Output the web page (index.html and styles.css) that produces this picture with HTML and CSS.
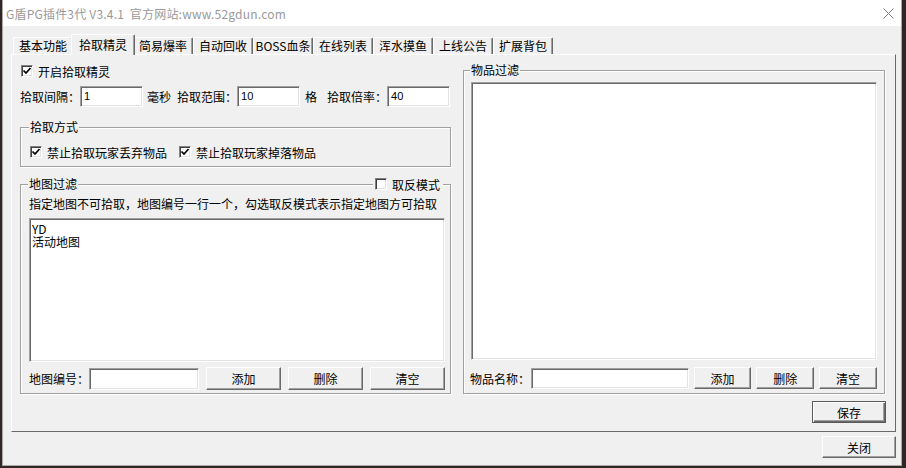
FILE: index.html
```html
<!DOCTYPE html>
<html lang="zh">
<head>
    <meta charset="UTF-8">
    <title>G盾PG插件3代</title>
    <link rel="stylesheet" href="styles.css">
</head>
<body>
    <div class="window">
        <div class="titlebar">
            <span class="title">G盾PG插件3代 V3.4.1&nbsp;&nbsp;官方网站:www.52gdun.com</span>
            <span class="close">
                <svg width="11" height="11" viewBox="0 0 11 11"><path d="M0.5 0.5 L10.5 10.5 M10.5 0.5 L0.5 10.5" stroke="#7a7a7a" stroke-width="1" fill="none"/></svg>
            </span>
        </div>
        <div class="client">
            <div class="tabs">
                <div class="tab">基本功能</div>
                <div class="tab active">拾取精灵</div>
                <div class="tab">简易爆率</div>
                <div class="tab">自动回收</div>
                <div class="tab">BOSS血条</div>
                <div class="tab">在线列表</div>
                <div class="tab">浑水摸鱼</div>
                <div class="tab">上线公告</div>
                <div class="tab">扩展背包</div>
            </div>

            <div class="panel">
                <!-- 左侧 -->
                <div class="left">
                    <label class="check first">
                        <span class="box"><svg width="10" height="10" viewBox="0 0 10 10"><path d="M1.5 4.5 L4 7 L8.5 2" stroke="#000" stroke-width="1.7" fill="none"/></svg></span>
                        开启拾取精灵
                    </label>
                    <div class="params">
                        <span class="lbl">拾取间隔：</span>
                        <input class="edit" value="1">
                        <span class="unit">毫秒</span>
                        <span class="lbl">拾取范围：</span>
                        <input class="edit" value="10">
                        <span class="unit short">格</span>
                        <span class="lbl">拾取倍率：</span>
                        <input class="edit" value="40">
                    </div>

                    <fieldset class="group way">
                        <legend>拾取方式</legend>
                        <label class="check">
                            <span class="box"><svg width="10" height="10" viewBox="0 0 10 10"><path d="M1.5 4.5 L4 7 L8.5 2" stroke="#000" stroke-width="1.7" fill="none"/></svg></span>
                            禁止拾取玩家丢弃物品
                        </label>
                        <label class="check">
                            <span class="box"><svg width="10" height="10" viewBox="0 0 10 10"><path d="M1.5 4.5 L4 7 L8.5 2" stroke="#000" stroke-width="1.7" fill="none"/></svg></span>
                            禁止拾取玩家掉落物品
                        </label>
                    </fieldset>

                    <fieldset class="group map">
                        <legend>地图过滤</legend>
                        <label class="check invert"><span class="box"></span>取反模式</label>
                        <div class="hint">指定地图不可拾取，地图编号一行一个，勾选取反模式表示指定地图方可拾取</div>
                        <textarea class="list">YD
活动地图</textarea>
                        <div class="row map-row">
                            <span class="lbl">地图编号：</span>
                            <input class="edit wide">
                            <button class="btn">添加</button>
                            <button class="btn">删除</button>
                            <button class="btn">清空</button>
                        </div>
                    </fieldset>
                </div>

                <!-- 右侧 -->
                <fieldset class="group items">
                    <legend>物品过滤</legend>
                    <textarea class="list"></textarea>
                    <div class="row item-row">
                        <span class="lbl">物品名称：</span>
                        <input class="edit wide">
                        <button class="btn">添加</button>
                        <button class="btn">删除</button>
                        <button class="btn">清空</button>
                    </div>
                </fieldset>

                <div class="save-row">
                    <button class="btn default">保存</button>
                </div>
            </div>

            <div class="bottom-row">
                <button class="btn">关闭</button>
            </div>
        </div>
    </div>
</body>
</html>
```

FILE: styles.css
```css
* {
    box-sizing: border-box;
}
body {
    margin: 0;
    background-color: #2e2723;
    font-family: "Noto Sans CJK SC", sans-serif;
    font-size: 12px;
    color: #000;
}
.window {
    margin-left: 2px;
    width: 900px;
    height: 466px;
    background-color: #f0f0f0;
    border: 1px solid #a9a9a9;
    border-top: 0;
}
.titlebar {
    height: 26px;
    background-color: #fff;
    display: flex;
    align-items: center;
    justify-content: space-between;
    padding: 0 7px 0 3px;
}
.title {
    color: #999;
    font-size: 12px;
    letter-spacing: 0.2px;
}
.close {
    display: flex;
    width: 11px;
    height: 11px;
}
.client {
    padding: 8px 0 0 8px;
}

/* 标签 */
.tabs {
    display: flex;
    align-items: flex-end;
    height: 20px;
    margin-left: 2px;
}
.tab {
    width: 60px;
    height: 17px;
    line-height: 16px;
    text-align: center;
    white-space: nowrap;
    border-top: 1px solid #fff;
    border-left: 1px solid #fff;
    border-right: 1px solid #696969;
    box-shadow: inset -1px 0 #a0a0a0;
    border-radius: 2px 2px 0 0;
}
.tab.active {
    width: 64px;
    height: 21px;
    line-height: 20px;
    margin: 0 -2px -1px;
    position: relative;
    z-index: 1;
    background-color: #f0f0f0;
}
.panel {
    width: 885px;
    height: 378px;
    border: 1px solid;
    border-color: #fff #696969 #696969 #fff;
    padding: 8px 10px 8px 8px;
    display: grid;
    grid-template-columns: 431px 422px;
    grid-template-rows: 1fr auto;
    column-gap: 12px;
    row-gap: 7px;
}

/* 通用控件 */
.check {
    display: flex;
    align-items: center;
    height: 14px;
    white-space: nowrap;
}
.box {
    width: 12px;
    height: 12px;
    margin-right: 5px;
    background-color: #fff;
    border: 1px solid;
    border-color: #808080 #fff #fff #808080;
    box-shadow: inset 1px 1px #404040, inset -1px -1px #e3e3e3;
    display: flex;
    align-items: center;
    justify-content: center;
}
.edit {
    width: 63px;
    height: 21px;
    padding: 0 3px 2px;
    font-family: "Liberation Sans", sans-serif;
    font-size: 11px;
    background-color: #fff;
    border: 1px solid;
    border-color: #a0a0a0 #fff #fff #a0a0a0;
    box-shadow: inset 1px 1px #696969, inset -1px -1px #e3e3e3;
    outline: none;
}
.btn {
    height: 23px;
    padding: 0;
    font-family: "Noto Sans CJK SC", sans-serif;
    font-size: 12px;
    color: #000;
    background-color: #f0f0f0;
    border: 1px solid;
    border-color: #fff #696969 #696969 #fff;
    box-shadow: inset -1px -1px #a0a0a0;
}
.btn.default {
    width: 74px;
    height: 22px;
    border-color: #5a5a5a;
    box-shadow: inset 1px 1px #fff, inset -1px -1px #696969, inset -2px -2px #a0a0a0;
}
.lbl {
    width: 60px;
    flex: none;
    white-space: nowrap;
}
.group {
    margin: 0;
    min-width: 0;
    border: 1px solid #a0a0a0;
    box-shadow: inset 1px 1px #fff, 1px 1px #fff;
}
.group legend {
    height: 14px;
    line-height: 14px;
    padding: 0 1px;
    margin-left: -1px;
    background-color: #f0f0f0;
}
.list {
    display: block;
    width: 100%;
    resize: none;
    padding: 3px 2px;
    font-family: "Noto Sans CJK SC", sans-serif;
    font-size: 12px;
    line-height: 13px;
    background-color: #fff;
    border: 1px solid;
    border-color: #a0a0a0 #fff #fff #a0a0a0;
    box-shadow: inset 1px 1px #696969, inset -1px -1px #e3e3e3;
    outline: none;
}
.row {
    display: flex;
    align-items: center;
}

/* 左侧 */
.left {
    display: flex;
    flex-direction: column;
}
.check.first {
    margin-top: 1px;
    margin-left: 1px;
}
.params {
    display: flex;
    align-items: center;
    height: 21px;
    margin-top: 8px;
}
.unit {
    margin: 0 6px 0 4px;
}
.unit.short {
    margin: 0 10px 0 5px;
}
.way {
    margin-top: 13px;
    padding: 11px 8px 7px 9px;
    display: flex;
    gap: 12px;
}
.map {
    position: relative;
    margin-top: 10px;
    flex: 1;
    padding: 6px 5px 3px 8px;
    display: flex;
    flex-direction: column;
}
.invert {
    position: absolute;
    top: -14px;
    right: 7px;
    padding: 0 3px 0 2px;
    background-color: #f0f0f0;
}
.hint {
    height: 14px;
    line-height: 14px;
    white-space: nowrap;
}
.map .list {
    flex: 1;
    margin-top: 7px;
}
.map-row {
    margin-top: 5px;
    gap: 7px;
}
.map-row .lbl {
    margin-right: -7px;
}
.map-row .edit {
    width: 110px;
    height: 22px;
}
.map-row .btn {
    width: 75px;
}

/* 右侧 */
.items {
    grid-column: 2;
    grid-row: 1;
    padding: 5px 7px 4px 7px;
    display: flex;
    flex-direction: column;
}
.items .list {
    flex: 1;
}
.item-row {
    margin-top: 7px;
    gap: 5px;
}
.item-row .lbl {
    margin-left: -1px;
    margin-right: -4px;
}
.item-row .edit {
    width: 158px;
}
.item-row .btn {
    width: 58px;
    height: 22px;
}
.save-row {
    grid-column: 2;
    grid-row: 2;
    display: flex;
    justify-content: flex-end;
    margin-right: -1px;
}
.bottom-row {
    width: 885px;
    display: flex;
    justify-content: flex-end;
    margin-top: 4px;
}
.bottom-row .btn {
    width: 74px;
    height: 22px;
}
```
